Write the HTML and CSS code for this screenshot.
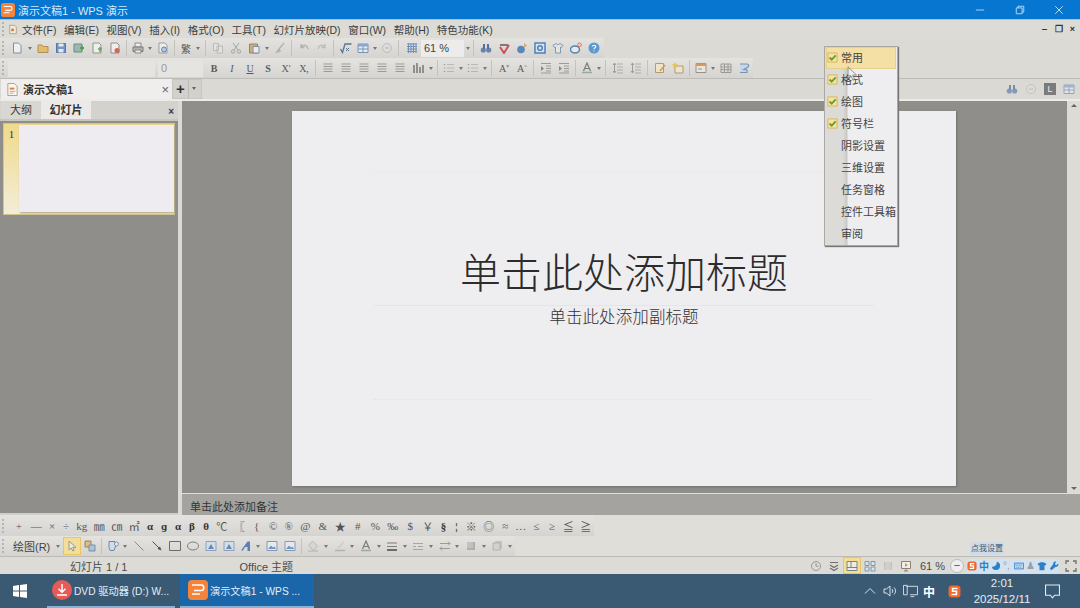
FILE: index.html
```html
<!DOCTYPE html>
<html lang="zh-CN">
<head>
<meta charset="utf-8">
<title>演示文稿1 - WPS 演示</title>
<link rel="stylesheet" href="styles.css">
</head>
<body>
<svg class="sprite" width="0" height="0">
  <symbol id="doc" viewBox="0 0 12 12"><path d="M2.500 1h5l2.500 2.500V11h-7.500z" fill="#f4f4f2" stroke="#6d7f96"/></symbol>
  <symbol id="open" viewBox="0 0 12 12"><path d="M1 3h4l1 1.500h5V10.500H1z" fill="#e6b755" stroke="#a9803a"/></symbol>
  <symbol id="save" viewBox="0 0 12 12"><path d="M1.500 1.500h9v9h-9z" fill="#5d86c4" stroke="#3a5c96"/><path d="M3.500 1.500h5v3h-5zM3.500 7h5v3.500h-5z" fill="#e8edf3"/></symbol>
  <symbol id="saveas" viewBox="0 0 12 12"><path d="M1 2h8v8H1z" fill="#8fb0a8" stroke="#4f7c70"/><path d="M7 6h4M9 4v4" stroke="#2f9a3c" stroke-width="2"/></symbol>
  <symbol id="pdf" viewBox="0 0 12 12"><path d="M2 1h6l2 2v8H2z" fill="#f2f2ef" stroke="#7d8a7a"/><path d="M7 7h4M9 5v5" stroke="#4a9a55" stroke-width="1.500"/></symbol>
  <symbol id="pdfr" viewBox="0 0 12 12"><path d="M2 1h6l2 2v8H2z" fill="#f2f2ef" stroke="#8a7a7a"/><circle cx="8" cy="8.500" r="2.500" fill="#cf4d42"/></symbol>
  <symbol id="print" viewBox="0 0 12 12"><path d="M3 1h6v4H3z" fill="#f0f0ee" stroke="#7b7b7b"/><path d="M1 5h10v4.500H1z" fill="#a8a8a6" stroke="#666"/><path d="M3 8h6v3H3z" fill="#eee" stroke="#777"/></symbol>
  <symbol id="preview" viewBox="0 0 12 12"><path d="M2 1h6l2 2v8H2z" fill="#f0f0ee" stroke="#8593a3"/><circle cx="7" cy="7.500" r="2.500" fill="#a9c8e6" stroke="#4f7397"/></symbol>
  <symbol id="copy" viewBox="0 0 12 12"><path d="M1.500 1.500h5v7h-5zM5 4h5.500v7H5z" fill="#e5e5e2" stroke="#b2b2ae"/></symbol>
  <symbol id="cut" viewBox="0 0 12 12"><path d="M3 1l5 7M9 1L4 8" stroke="#999" fill="none"/><circle cx="3" cy="9.500" r="1.700" fill="none" stroke="#999"/><circle cx="9" cy="9.500" r="1.700" fill="none" stroke="#999"/></symbol>
  <symbol id="paste" viewBox="0 0 12 12"><path d="M1.500 2h8v9h-8z" fill="#c7a768" stroke="#8a7140"/><path d="M5 4.500h6V11H5z" fill="#edf0f4" stroke="#6b7f96"/></symbol>
  <symbol id="brush" viewBox="0 0 12 12"><path d="M10 1L5 7M5 7l-2 3 3-1z" stroke="#aaa" stroke-width="1.500" fill="none"/></symbol>
  <symbol id="undo" viewBox="0 0 12 12"><path d="M3 5c3-3 6-2 7 2M3 2v3.500h3.500" stroke="#a7a7a3" stroke-width="1.300" fill="none"/></symbol>
  <symbol id="redo" viewBox="0 0 12 12"><path d="M9 5C6 2 3 3 2 7M9 2v3.500H5.500" stroke="#b6b6b2" stroke-width="1.300" fill="none"/></symbol>
  <symbol id="sqrt" viewBox="0 0 12 12"><path d="M0.500 7l2 3.500L5 2h6.500" stroke="#3f5f85" stroke-width="1.300" fill="none"/><path d="M6 9l3-3M9 9L6 6" stroke="#3f5f85"/></symbol>
  <symbol id="table" viewBox="0 0 12 12"><path d="M1 2h10v8.500H1z" fill="#e7eef7" stroke="#6484ad"/><path d="M1 2h10v2.500H1z" fill="#7a9bc9"/><path d="M1 7h10M6 4.500v6" stroke="#6484ad"/></symbol>
  <symbol id="clip" viewBox="0 0 12 12"><circle cx="6" cy="6" r="4.500" fill="#ddd" stroke="#b5b5b0"/><path d="M4 6h4" stroke="#aaa"/></symbol>
  <symbol id="grid" viewBox="0 0 12 12"><path d="M1 2h10M1 4.500h10M1 7h10M1 9.500h10M2.500 1v10M5 1v10M7.500 1v10M10 1v10" stroke="#5f7fb2"/></symbol>
  <symbol id="find" viewBox="0 0 12 12"><circle cx="3.300" cy="8" r="2.600" fill="#4a73a8"/><circle cx="8.700" cy="8" r="2.600" fill="#4a73a8"/><path d="M3 2h2v5H3zM7 2h2v5H7z" fill="#38598a"/></symbol>
  <symbol id="spell" viewBox="0 0 12 12"><path d="M2 5l4 6 5-8" stroke="#c8323c" stroke-width="2" fill="none"/><path d="M2 3h8" stroke="#7a5a66" stroke-width="2"/></symbol>
  <symbol id="share" viewBox="0 0 12 12"><circle cx="5" cy="7.500" r="3.800" fill="#3e74b6"/><path d="M8 1l3 2.500-3 2.500z" fill="#e09a46"/></symbol>
  <symbol id="dbox" viewBox="0 0 12 12"><path d="M1 1h10v10H1z" fill="#d7e3f2" stroke="#2f6fb3" stroke-width="1.500"/><circle cx="6" cy="6" r="2.300" fill="none" stroke="#2f6fb3" stroke-width="1.500"/></symbol>
  <symbol id="shirt" viewBox="0 0 12 12"><path d="M4 1.500L1 3.500l1.500 2 1-.5V11h5V5l1 .5 1.500-2-3-2-2 1.500z" fill="#e7e7e4" stroke="#6f8aa8"/></symbol>
  <symbol id="weibo" viewBox="0 0 12 12"><ellipse cx="5" cy="7.500" rx="4.500" ry="3.500" fill="#e8edf3" stroke="#3c6fa8" stroke-width="1.500"/><circle cx="9.500" cy="2.800" r="1.800" fill="none" stroke="#d05a4b"/></symbol>
  <symbol id="help" viewBox="0 0 12 12"><circle cx="6" cy="6" r="5.500" fill="#3d8bd4"/><path d="M4.300 4.500C4.500 2.800 7.800 2.800 7.800 4.600 7.800 5.800 6 5.800 6 7.300" stroke="#fff" stroke-width="1.200" fill="none"/><path d="M5.400 8.400h1.200v1.200H5.400z" fill="#fff"/></symbol>
  <symbol id="align" viewBox="0 0 12 12"><path d="M1.500 2h9M1.500 4.500h9M1.500 7h9M1.500 9.500h9" stroke="#8b8b88" stroke-width="1.200"/></symbol>
  <symbol id="chart" viewBox="0 0 12 12"><path d="M2 11V3M5 11V1M8 11V5M11 11V3" stroke="#66635e" stroke-width="1.500"/></symbol>
  <symbol id="list" viewBox="0 0 12 12"><path d="M4 2.500h7M4 6h7M4 9.500h7" stroke="#b0b0ac"/><path d="M1.500 2v1M1.500 5.500v1M1.500 9v1" stroke="#8e8e8b" stroke-width="1.500"/></symbol>
  <symbol id="indent" viewBox="0 0 12 12"><path d="M1 1.500h10M6 4h5M6 6.500h5M6 9h5M1 11h10" stroke="#8d8d8a"/><path d="M1 4l3 2.500L1 9z" fill="#777"/></symbol>
  <symbol id="fcolor" viewBox="0 0 12 12"><path d="M2.500 9L6 1l3.500 8M4 6.500h4" stroke="#666" stroke-width="1.200" fill="none"/><path d="M1 10.500h10" stroke="#8aa08f" stroke-width="1.500"/></symbol>
  <symbol id="spacing" viewBox="0 0 12 12"><path d="M5 2h6M5 5h6M5 8h6M5 11h6" stroke="#a3a3a0"/><path d="M2.500 1v10M1 3l1.500-2L4 3M1 9l1.500 2L4 9" stroke="#8f8f8c" fill="none"/></symbol>
  <symbol id="note" viewBox="0 0 12 12"><path d="M1.500 1.500h8v9h-8z" fill="#efe8cc" stroke="#a88f53"/><path d="M11 3L6 9" stroke="#d68a33" stroke-width="1.500"/></symbol>
  <symbol id="star" viewBox="0 0 12 12"><path d="M3 4h8v7H3z" fill="#eee8cf" stroke="#a88f53"/><path d="M3 0l1 2 2 .500-1.500 1.500.3 2L3 5 1.200 6l.3-2L0 2.500 2 2z" fill="#ecbb37"/></symbol>
  <symbol id="layout" viewBox="0 0 12 12"><path d="M1 1.500h10v9H1z" fill="#ece9e0" stroke="#8a8378"/><path d="M1 1.500h10v2.500H1z" fill="#d28b46"/><path d="M3 7h4" stroke="#8a8378"/></symbol>
  <symbol id="tbl2" viewBox="0 0 12 12"><path d="M1 2h10v8.500H1z" fill="#dedcd7" stroke="#8a8a87"/><path d="M1 5h10M1 7.700h10M4.500 2v8.500M8 2v8.500" stroke="#8a8a87"/></symbol>
  <symbol id="cycle" viewBox="0 0 12 12"><path d="M2 2h7c2 0 2 2 1 3L6 7.500c2 0 4 0 3 3H2" fill="#c6d4e6" stroke="#5f84b6" stroke-width="1.200"/></symbol>
  <symbol id="pointer" viewBox="0 0 12 12"><path d="M3 1v9l2.300-2 1.500 3 1.400-.7-1.500-3H10z" fill="#eeeee8" stroke="#7d8ba0"/></symbol>
  <symbol id="wrap" viewBox="0 0 12 12"><path d="M1 1h6v6H1z" fill="#d8b871" stroke="#8a7140"/><path d="M5 5h6v6H5z" fill="#a8bed8" stroke="#5f7fa5"/></symbol>
  <symbol id="shapes" viewBox="0 0 12 12"><path d="M2 1.500h6v3l1 1-2 5H3l-1-3z" fill="#cfdcec" stroke="#55769e"/><circle cx="9.500" cy="4" r="2" fill="#eee" stroke="#6d85a5"/></symbol>
  <symbol id="line" viewBox="0 0 12 12"><path d="M1.500 1.500l9 9" stroke="#777"/></symbol>
  <symbol id="arrow" viewBox="0 0 12 12"><path d="M1.500 1.500l7 7" stroke="#333"/><path d="M10.500 10.500l-4-1.500 2.500-2.500z" fill="#333"/></symbol>
  <symbol id="rect" viewBox="0 0 12 12"><path d="M.5 1.500h11v9H.5z" fill="none" stroke="#555"/></symbol>
  <symbol id="oval" viewBox="0 0 12 12"><ellipse cx="6" cy="6" rx="5.500" ry="4" fill="none" stroke="#6a6a6a"/></symbol>
  <symbol id="tbox" viewBox="0 0 12 12"><path d="M1 1.500h10v9H1z" fill="#d2dff0" stroke="#7b95b8"/><path d="M6 4L3 9h6z" fill="#5078aa"/></symbol>
  <symbol id="wordart" viewBox="0 0 12 12"><path d="M1 10.500L7.500 1.500H10v9.500H7.500V7H5L3 10.500z" fill="#3b6fb3"/></symbol>
  <symbol id="pic" viewBox="0 0 12 12"><path d="M1 1.500h10v9H1z" fill="#e8edf4" stroke="#6e8bb1"/><path d="M2 9l3-3.500 2 2 1.500-1L10 9z" fill="#5c86b8"/></symbol>
  <symbol id="fill" viewBox="0 0 12 12"><path d="M5.500 1l5 5-4 4.500-5-5z" fill="#d5d5d2" stroke="#b0b0ac"/><path d="M1 11h10" stroke="#b8b8b4" stroke-width="1.500"/></symbol>
  <symbol id="lcolor" viewBox="0 0 12 12"><path d="M9.500 1L4 7 3 9l2-1 5.500-6z" fill="#c8c8c5"/><path d="M1 10.500h10" stroke="#aaa" stroke-width="1.500"/></symbol>
  <symbol id="thick" viewBox="0 0 12 12"><path d="M1 3h10M1 6.500h10" stroke="#666" stroke-width="1.200"/><path d="M1 10h10" stroke="#555" stroke-width="2"/></symbol>
  <symbol id="dash" viewBox="0 0 12 12"><path d="M1 3.500h10M1 6.500h3M6 6.500h5M1 9.500h10" stroke="#9a9a97"/></symbol>
  <symbol id="arrows" viewBox="0 0 12 12"><path d="M1 3.500h10M1 8.500h10" stroke="#8c8c89"/><path d="M9 1.500l2 2-2 2M3 6.500l-2 2 2 2" stroke="#8c8c89" fill="none"/></symbol>
  <symbol id="shadow" viewBox="0 0 12 12"><path d="M2 2h8v8H2z" fill="#a5a5a2"/><path d="M2 2h6v6H2z" fill="#bcbcb9"/></symbol>
  <symbol id="cube" viewBox="0 0 12 12"><path d="M3 3l2-2h6v7l-2 2H2z" fill="#bbb"/><path d="M2 3h7v7H2z" fill="#d0d0cd" stroke="#aaa"/></symbol>
  <symbol id="clock" viewBox="0 0 12 12"><circle cx="6" cy="6" r="4.500" fill="none" stroke="#888"/><path d="M6 3v3.200h2.500" stroke="#888" fill="none"/></symbol>
  <symbol id="chev" viewBox="0 0 12 12"><path d="M2 2.500h8M2 5l4 2.500L10 5M2 8l4 2.500L10 8" stroke="#555" fill="none" stroke-width="1.200"/></symbol>
  <symbol id="view1" viewBox="0 0 12 12"><path d="M1 1.500h10v9H1z" fill="#eef1f5" stroke="#5c7088"/><path d="M1 7.500h10M5 1.500v6" stroke="#5c7088"/></symbol>
  <symbol id="view2" viewBox="0 0 12 12"><path d="M1 1.500h4v4H1zM7 1.500h4v4H7zM1 7h4v4H1zM7 7h4v4H7z" fill="#dbe5ef" stroke="#7288a2"/></symbol>
  <symbol id="view3" viewBox="0 0 12 12"><path d="M2 2h8v8H2z" fill="#b9b9b6"/><path d="M4 2v8M6 2v8M8 2v8" stroke="#e1e0dc"/></symbol>
  <symbol id="view4" viewBox="0 0 12 12"><path d="M1.500 1.500h9v7h-9z" fill="#f2f1ea" stroke="#77705f"/><path d="M5 3l3 2-3 2z" fill="#dd8a2a"/><path d="M6 8.500V11M4 11h4" stroke="#77705f"/></symbol>
  <symbol id="full" viewBox="0 0 12 12"><path d="M1 4V1h3M8 1h3v3M11 8v3H8M4 11H1V8" stroke="#555" stroke-width="1.300" fill="none"/></symbol>
  <symbol id="check" viewBox="0 0 12 12"><path d="M1 1h10v10H1z" fill="#f6e3a0" stroke="#d8b45c"/><path d="M2.800 6l2.300 2.300L9.500 3.700" stroke="#5fa32e" stroke-width="2" fill="none"/></symbol>
  <symbol id="sogou" viewBox="0 0 12 12"><rect x="0.500" y="0.500" width="11" height="11" rx="3" fill="#ee6a2c"/><path d="M8.800 3.200H4.200v2.600h3.600v3H3.200" stroke="#fff" stroke-width="1.500" fill="none"/></symbol>
  <symbol id="moon" viewBox="0 0 12 12"><path d="M7 1a5 5 0 1 1-6 6 5.500 5.500 0 0 0 6-6z" fill="#2f7fc5"/></symbol>
  <symbol id="kbd" viewBox="0 0 12 12"><path d="M.5 2.500h11v7H.5z" fill="#bcd6ef" stroke="#2f7fc5"/><path d="M2 5h8M3 7.500h6" stroke="#2f7fc5" stroke-dasharray="1 1"/></symbol>
  <symbol id="tshirt" viewBox="0 0 12 12"><path d="M4 1.500L.5 3.500l1.500 2 1-.5V11h6V5l1 .5 1.500-2L8 1.500z" fill="#2f7fc5"/></symbol>
  <symbol id="wrench" viewBox="0 0 12 12"><path d="M11 3L8.500 5 7 3.500 9 1C7 0 4.500 1.500 5 4L1 9l2 2 5-4c2.500.5 4-2 3-4z" fill="#2f7fc5"/></symbol>
  <symbol id="win" viewBox="0 0 14 14"><path d="M0 2l6-.9v5.400H0zM7 1l7-1v6.500H7zM0 7.500h6v5.400L0 12zM7 7.500h7V14l-7-1z" fill="#fff"/></symbol>
  <symbol id="dl" viewBox="0 0 20 20"><circle cx="10" cy="10" r="10" fill="#e85a55"/><path d="M10 4v8M6.500 8.800L10 12.300l3.500-3.500M5 15h10" stroke="#fff" stroke-width="1.500" fill="none"/></symbol>
  <symbol id="wps" viewBox="0 0 20 20"><rect width="20" height="20" rx="4" fill="#f5843a"/><path d="M4 5h9.500c3 0 3 5.500 0 5.500H6M4 14h8" stroke="#fff" stroke-width="1.500" fill="none"/></symbol>
  <symbol id="spk" viewBox="0 0 14 14"><path d="M1 5h2.500L7 2v10L3.500 9H1z" fill="none" stroke="#d7dfe6"/><path d="M9 5c1 1 1 3 0 4M11 3.500c2 2 2 5 0 7" stroke="#d7dfe6" fill="none"/></symbol>
  <symbol id="net" viewBox="0 0 16 14"><path d="M3.500 2h12v9h-8" fill="none" stroke="#d7dfe6"/><path d="M.5 1h4v10h-4zM8 13h4" fill="none" stroke="#d7dfe6"/></symbol>
  <symbol id="bubble" viewBox="0 0 14 14"><path d="M.5 1h13v9.500H9L7 13l-2-2.500H.5z" fill="none" stroke="#e6ecf1"/></symbol>
  <symbol id="up" viewBox="0 0 12 12"><path d="M1 8.500L6 3.500l5 5" stroke="#d7dfe6" fill="none"/></symbol>
  <symbol id="file" viewBox="0 0 14 14"><path d="M2 .5h7L12 3.500V13.500H2z" fill="#faf7f0" stroke="#aa9a88"/><path d="M4 5h5v2H4z" fill="#e07c39"/><path d="M4 9h6M4 11h4" stroke="#b9a58f"/></symbol>
  <symbol id="menuico" viewBox="0 0 12 14"><path d="M2 2h6l2 2v8H2z" fill="#efe9dc" stroke="#b19a80"/><path d="M4 6h3v3H4z" fill="#d9752f"/></symbol>
</svg>

<div class="app">
  <header class="titlebar">
    <svg class="tb-logo"><use href="#wps"/></svg>
    <span class="tb-title">演示文稿1 - WPS 演示</span>
    <div class="wincontrols">
      <svg class="wc" viewBox="0 0 12 12"><path d="M1 6h10" stroke="#cfe4f6"/></svg>
      <svg class="wc" viewBox="0 0 12 12"><path d="M1.500 3.500h7v7h-7zM3.500 3.500v-2h7v7h-2" stroke="#cfe4f6" fill="none"/></svg>
      <svg class="wc" viewBox="0 0 12 12"><path d="M1.500 1.500l9 9M10.500 1.500l-9 9" stroke="#e2f0fb"/></svg>
    </div>
  </header>

  <nav class="menubar">
    <i class="grip"></i>
    <svg class="menu-ico"><use href="#menuico"/></svg>
    <span>文件(F)</span><span>编辑(E)</span><span>视图(V)</span><span>插入(I)</span><span>格式(O)</span><span>工具(T)</span><span>幻灯片放映(D)</span><span>窗口(W)</span><span>帮助(H)</span><span>特色功能(K)</span>
    <div class="doc-controls">
      <b class="dc">‒</b><b class="dc">❐</b><b class="dc">×</b>
    </div>
  </nav>

  <div class="toolrow">
    <div class="bar bar-std">
      <i class="grip"></i>
      <b class="t"><svg><use href="#doc"/></svg></b><b class="d"></b>
      <b class="t"><svg><use href="#open"/></svg></b>
      <b class="t"><svg><use href="#save"/></svg></b>
      <b class="t"><svg><use href="#saveas"/></svg></b>
      <b class="t"><svg><use href="#pdf"/></svg></b>
      <b class="t"><svg><use href="#pdfr"/></svg></b>
      <i class="s"></i>
      <b class="t n"><svg><use href="#print"/></svg></b><b class="d"></b>
      <b class="t"><svg><use href="#preview"/></svg></b>
      <i class="s"></i>
      <b class="t n g">繁</b><b class="d w"></b>
      <i class="s s2"></i>
      <b class="t"><svg><use href="#copy"/></svg></b>
      <b class="t"><svg><use href="#cut"/></svg></b>
      <b class="t"><svg><use href="#paste"/></svg></b><b class="d"></b>
      <b class="t"><svg><use href="#brush"/></svg></b>
      <i class="s"></i>
      <b class="t"><svg><use href="#undo"/></svg></b>
      <b class="t"><svg><use href="#redo"/></svg></b>
      <i class="s"></i>
      <b class="t"><svg><use href="#sqrt"/></svg></b>
      <b class="t n"><svg><use href="#table"/></svg></b><b class="d"></b>
      <b class="t n"><svg><use href="#clip"/></svg></b>
      <i class="s s3"></i>
      <b class="t"><svg><use href="#grid"/></svg></b>
      <span class="combo zoom">61 %</span><b class="d"></b>
      <i class="s s2"></i>
      <b class="t"><svg><use href="#find"/></svg></b>
      <b class="t"><svg><use href="#spell"/></svg></b>
      <b class="t"><svg><use href="#share"/></svg></b>
      <b class="t"><svg><use href="#dbox"/></svg></b>
      <b class="t"><svg><use href="#shirt"/></svg></b>
      <b class="t"><svg><use href="#weibo"/></svg></b>
      <b class="t"><svg><use href="#help"/></svg></b>
    </div>
  </div>

  <div class="toolrow">
    <div class="bar bar-fmt">
      <i class="grip"></i>
      <span class="combo font"></span>
      <span class="combo size">0</span>
      <b class="t f fb">B</b><b class="t f fi">I</b><b class="t f fu">U</b><b class="t f fb">S</b><b class="t f">X'</b><b class="t f">X,</b>
      <i class="s"></i>
      <b class="t"><svg><use href="#align"/></svg></b><b class="t"><svg><use href="#align"/></svg></b><b class="t"><svg><use href="#align"/></svg></b><b class="t"><svg><use href="#align"/></svg></b><b class="t"><svg><use href="#align"/></svg></b>
      <b class="t"><svg><use href="#chart"/></svg></b><b class="d"></b>
      <i class="s"></i>
      <b class="t n"><svg><use href="#list"/></svg></b><b class="d"></b>
      <b class="t n"><svg><use href="#list"/></svg></b><b class="d"></b>
      <i class="s"></i>
      <b class="t f">A⁺</b><b class="t f">A⁻</b>
      <i class="s"></i>
      <b class="t"><svg><use href="#indent"/></svg></b><b class="t"><svg><use href="#indent"/></svg></b>
      <i class="s"></i>
      <b class="t n"><svg><use href="#fcolor"/></svg></b><b class="d"></b>
      <i class="s"></i>
      <b class="t"><svg><use href="#spacing"/></svg></b><b class="t"><svg><use href="#spacing"/></svg></b>
      <i class="s"></i>
      <b class="t"><svg><use href="#note"/></svg></b><b class="t"><svg><use href="#star"/></svg></b>
      <i class="s"></i>
      <b class="t n"><svg><use href="#layout"/></svg></b><b class="d"></b>
      <b class="t"><svg><use href="#tbl2"/></svg></b><b class="t"><svg><use href="#cycle"/></svg></b>
    </div>
  </div>

  <div class="tabrow">
    <div class="doctab">
      <svg class="doctab-ico"><use href="#file"/></svg>
      <span class="doctab-name">演示文稿1</span>
      <span class="doctab-x">×</span>
    </div>
    <div class="newtab"><span class="plus">+</span><span class="plus-d"></span></div>
    <div class="tab-tools">
      <svg><use href="#find"/></svg>
      <svg><use href="#clip"/></svg>
      <span class="tt-l">L</span>
      <svg><use href="#table"/></svg>
    </div>
  </div>

  <main class="workspace">
    <aside class="panel">
      <div class="panel-tabs">
        <span class="ptab">大纲</span>
        <span class="ptab on">幻灯片</span>
        <span class="ptab-x">×</span>
      </div>
      <div class="thumbs">
        <div class="thumb-row">
          <span class="thumb-n">1</span>
          <div class="thumb"></div>
        </div>
      </div>
    </aside>
    <section class="editor">
      <div class="stage">
        <div class="canvas">
          <div class="slide">
            <div class="ph ph-title">单击此处添加标题</div>
            <div class="ph ph-sub">单击此处添加副标题</div>
          </div>
        </div>
        <div class="vscroll"><span class="vs-up"></span><span class="vs-down"></span></div>
      </div>
      <div class="notes">单击此处添加备注</div>
    </section>
  </main>

  <div class="toolrow low sym">
    <div class="bar bar-sym">
      <i class="grip"></i>
      <b class="c">+</b><b class="c">—</b><b class="c n">×</b><b class="c n">÷</b><b class="c">kg</b><b class="c">㎜</b><b class="c">㎝</b><b class="c">㎡</b><b class="c n k">α</b><b class="c n k">ɡ</b><b class="c n k">α</b><b class="c n k">β</b><b class="c n k">θ</b><b class="c">℃</b><b class="c">〖</b><b class="c">{</b><b class="c m">©</b><b class="c m">®</b><b class="c">@</b><b class="c">&amp;</b><b class="c">★</b><b class="c">#</b><b class="c">%</b><b class="c">‰</b><b class="c">$</b><b class="c">￥</b><b class="c n k">§</b><b class="c x k">¦</b><b class="c">※</b><b class="c">◎</b><b class="c m">≈</b><b class="c m">…</b><b class="c m">≤</b><b class="c m">≥</b><b class="c">≦</b><b class="c">≧</b>
    </div>
  </div>

  <div class="toolrow low">
    <div class="bar bar-draw">
      <i class="grip"></i>
      <span class="draw-label">绘图(R)</span><b class="d"></b>
      <b class="t on"><svg><use href="#pointer"/></svg></b>
      <b class="t"><svg><use href="#wrap"/></svg></b>
      <i class="s"></i>
      <b class="t n"><svg><use href="#shapes"/></svg></b><b class="d"></b>
      <b class="t"><svg><use href="#line"/></svg></b>
      <b class="t"><svg><use href="#arrow"/></svg></b>
      <b class="t"><svg><use href="#rect"/></svg></b>
      <b class="t"><svg><use href="#oval"/></svg></b>
      <b class="t"><svg><use href="#tbox"/></svg></b>
      <b class="t"><svg><use href="#tbox"/></svg></b>
      <b class="t n"><svg><use href="#wordart"/></svg></b><b class="d"></b>
      <b class="t"><svg><use href="#pic"/></svg></b>
      <b class="t"><svg><use href="#pic"/></svg></b>
      <i class="s"></i>
      <b class="t n2"><svg><use href="#fill"/></svg></b><b class="d"></b>
      <b class="t n2"><svg><use href="#lcolor"/></svg></b><b class="d"></b>
      <b class="t n2"><svg><use href="#fcolor"/></svg></b><b class="d"></b>
      <b class="t n2"><svg><use href="#thick"/></svg></b><b class="d"></b>
      <b class="t n2"><svg><use href="#dash"/></svg></b><b class="d"></b>
      <b class="t n2"><svg><use href="#arrows"/></svg></b><b class="d"></b>
      <b class="t n2"><svg><use href="#shadow"/></svg></b><b class="d"></b>
      <b class="t n2"><svg><use href="#cube"/></svg></b><b class="d"></b>
    </div>
  </div>

  <footer class="status">
    <span class="st-slide">幻灯片 1 / 1</span>
    <span class="st-theme">Office 主题</span>
    <div class="st-right">
      <b class="t"><svg><use href="#clock"/></svg></b>
      <b class="t"><svg><use href="#chev"/></svg></b>
      <b class="t on"><svg><use href="#view1"/></svg></b>
      <b class="t"><svg><use href="#view2"/></svg></b>
      <b class="t"><svg><use href="#view3"/></svg></b>
      <b class="t"><svg><use href="#view4"/></svg></b>
      <span class="st-zoom">61 %</span>
      <span class="st-minus">−</span>
      <div class="sogou">
        <svg><use href="#sogou"/></svg>
        <span class="sg-cn">中</span>
        <svg><use href="#moon"/></svg>
        <span class="sg-dot">°,</span>
        <svg><use href="#kbd"/></svg>
        <span class="sg-dot">♟</span>
        <svg><use href="#tshirt"/></svg>
        <svg><use href="#wrench"/></svg>
      </div>
      <b class="t"><svg><use href="#full"/></svg></b>
    </div>
    <span class="tip">点我设置</span>
  </footer>

  <div class="taskbar">
    <div class="start"><svg><use href="#win"/></svg></div>
    <div class="task"><svg><use href="#dl"/></svg><span>DVD 驱动器 (D:) W...</span></div>
    <div class="task active"><svg><use href="#wps"/></svg><span>演示文稿1 - WPS ...</span></div>
    <div class="tray">
      <svg class="tr-up"><use href="#up"/></svg>
      <svg class="tr-i"><use href="#spk"/></svg>
      <svg class="tr-n"><use href="#net"/></svg>
      <span class="tr-cn">中</span>
      <svg class="tr-s"><use href="#sogou"/></svg>
      <div class="clock"><span>2:01</span><span>2025/12/11</span></div>
      <svg class="tr-b"><use href="#bubble"/></svg>
    </div>
  </div>

  <div class="popup">
    <div class="pi hot"><svg><use href="#check"/></svg><span>常用</span></div>
    <div class="pi"><svg><use href="#check"/></svg><span>格式</span></div>
    <div class="pi"><svg><use href="#check"/></svg><span>绘图</span></div>
    <div class="pi"><svg><use href="#check"/></svg><span>符号栏</span></div>
    <div class="pi plain"><span>阴影设置</span></div>
    <div class="pi plain"><span>三维设置</span></div>
    <div class="pi plain"><span>任务窗格</span></div>
    <div class="pi plain"><span>控件工具箱</span></div>
    <div class="pi plain"><span>审阅</span></div>
  </div>
  <svg class="cursor" viewBox="0 0 12 18"><path d="M1 1v13l3.200-3 2.300 5 2-1-2.300-4.800H10.500z" fill="#eeeeee" fill-opacity=".6" stroke="#6f6f6f" stroke-width=".8"/></svg>
</div>
</body>
</html>
```
FILE: styles.css
```css
* { box-sizing: border-box; }
html, body { margin: 0; padding: 0; }
body {
  width: 1080px; height: 608px; overflow: hidden;
  font-family: "Liberation Sans", "Noto Sans CJK SC", sans-serif;
  font-size: 11px; color: #3a3a38; background: #dcdbd6;
}
.sprite { position: absolute; }
b, i { font-weight: normal; font-style: normal; }
.app { position: relative; width: 1080px; height: 608px; display: flex; flex-direction: column; }

.titlebar { height: 19px; flex: none; display: flex; align-items: center; background: #0676d0; color: #d6e9f8; font-size: 11px; }
.tb-logo { width: 14px; height: 14px; margin-left: 1px; }
.tb-title { margin-left: 3px; }
.wincontrols { margin-left: auto; display: flex; gap: 29.500px; margin-right: 16px; }
.wc { width: 10px; height: 10px; }

.menubar { height: 19px; flex: none; display: flex; align-items: center; background: #dcdbd6; border-top: 1px solid #aebfcd; padding-left: 2px; color: #3c3c3a; font-size: 10.500px; }
.menubar > span { margin-right: 7.600px; white-space: nowrap; }
.menu-ico { width: 10px; height: 13px; margin: 0 4px 0 4px; }
.grip { width: 2px; height: 14px; flex: none; border-left: 2px dotted #b5b4af; }
.doc-controls { margin-left: auto; display: flex; gap: 5px; margin-right: 3px; }
.dc { width: 9px; text-align: center; font-size: 9px; font-weight: bold; color: #333; }

.toolrow { height: 20px; flex: none; display: flex; background: #dbdad5; }
.bar { height: 20px; display: flex; align-items: center; padding-left: 2px; background: linear-gradient(#e4e3e0, #d5d4d0); }
.bar-std { width: 604px; }
.bar-std .grip { margin-right: 4px; }
.bar-fmt { width: 753px; }
.bar-fmt .grip { margin-right: 4px; }
.bar-sym { width: 594px; height: 21px; padding-left: 2px; }
.bar-sym .grip { margin-right: 6px; }
.bar-draw { width: 515px; }
.low { background: #dfded9; }
.toolrow.sym { height: 21px; }

.t { width: 18px; height: 18px; flex: none; display: flex; align-items: center; justify-content: center; font-size: 10px; color: #666; }
.t svg { width: 12px; height: 12px; opacity: .82; filter: blur(.3px); }
.t.n { width: 16px; }
.t.n2 { width: 17.300px; }
.t.g { font-size: 10px; color: #555; }
.t.f { font-family: "Liberation Serif", serif; font-size: 10px; color: #5a5a58; }
.fb { font-weight: bold; }
.fi { font-style: italic; }
.fu { text-decoration: underline; }
.t.on { background: #f4de93; box-shadow: inset 0 0 0 1px #e8c566; }
.d { width: 8px; height: 18px; flex: none; position: relative; }
.d::after { content: ""; position: absolute; left: 2px; top: 8px; border: 2px solid transparent; border-top: 3px solid #777; border-bottom: 0; }
.d.w { width: 10px; }
.s { width: 6px; height: 16px; flex: none; position: relative; }
.s::after { content: ""; position: absolute; left: 2px; top: 0; width: 1px; height: 16px; background: #c3c2bd; }
.s.s2 { width: 5px; }
.s.s2::after { left: 1px; }
.s.s3 { width: 8px; }
.s.s3::after { left: 3px; }

.combo { height: 17px; display: block; flex: none; background: #e5e4e1; font-size: 10px; padding: 2px 0 0 3px; }
.combo.zoom { width: 43px; background: #edecea; font-size: 11px; color: #444; }
.combo.font { width: 147px; margin-right: 3px; }
.combo.size { width: 45px; margin-right: 2px; color: #999; font-size: 11px; }

.tabrow { height: 23px; flex: none; display: flex; align-items: center; background: #dad9d4; border-top: 1px solid #bdbcb8; border-bottom: 2px solid #ecebe8; }
.doctab { width: 171px; height: 20px; display: flex; align-items: center; background: #efeeec; padding-left: 5px; margin-left: 1px; }
.doctab-ico { width: 13px; height: 13px; }
.doctab-name { margin-left: 4px; font-weight: bold; color: #333; font-size: 11px; }
.doctab-x { margin-left: auto; margin-right: 3px; color: #666; font-size: 13px; }
.newtab { width: 30px; height: 20px; display: flex; align-items: center; background: #d2d1cc; border: 1px solid #c6c5c0; }
.plus { width: 16px; text-align: center; font-size: 15px; font-weight: bold; color: #333; border-right: 1px solid #bbb; line-height: 18px; }
.plus-d { width: 0; height: 0; margin-left: 3px; border: 2px solid transparent; border-top: 3px solid #666; }
.tab-tools { margin-left: auto; display: flex; align-items: center; gap: 7px; margin-right: 5px; }
.tab-tools svg { width: 12px; height: 12px; opacity: .6; }
.tt-l { width: 12px; height: 12px; background: #7c7b7b; color: #eee; font-size: 9px; text-align: center; line-height: 12px; }

.workspace { flex: 1; min-height: 0; display: flex; background: #dbdad5; }
.panel { width: 178px; flex: none; display: flex; flex-direction: column; background: #8f8e8a; border-bottom: 2px solid #cfcec9; }
.panel-tabs { height: 20px; flex: none; display: flex; background: #d3d2cd; position: relative; padding-left: 1px; border-bottom: 2px solid #c8c7bf; }
.ptab { width: 40px; text-align: center; line-height: 19px; background: #d8d7d2; font-size: 11px; }
.ptab.on { width: 50px; background: #ebeae8; font-weight: bold; color: #333; }
.ptab-x { position: absolute; right: 4px; top: 5px; font-size: 10px; font-weight: bold; }
.thumbs { flex: 1; padding: 2px 3px 0 3px; }
.thumb-row { height: 92px; display: flex; background: linear-gradient(#f0da8a, #f3edd8); border: 1px solid #d3c48e; }
.thumb-n { width: 15px; text-align: center; font-family: "Liberation Serif", serif; font-size: 11px; padding-top: 4px; color: #333; }
.thumb { width: 155px; height: 87px; margin-top: 1px; background: #eeecf0; box-shadow: 1px 1px 2px #a69f85; }
.editor { flex: 1; min-width: 0; display: flex; flex-direction: column; margin-left: 4px; }
.stage { flex: 1; min-height: 0; display: flex; background: #8f8e8a; }
.canvas { flex: 1; padding: 10px 0 0 110px; }
.slide { width: 664px; height: 375px; background: #eeedf0; box-shadow: 1px 1px 2px #6f6e6b; display: flex; flex-direction: column; align-items: center; padding-top: 60px; }
.ph { width: 500px; text-align: center; font-family: "Noto Sans CJK SC", sans-serif; font-weight: 300; color: #333; }
.ph-title { height: 135px; padding-top: 70px; font-size: 41px; line-height: 56px; color: #2c2c2c; border-bottom: 1px solid #e5e4e7; border-top: 1px dotted #e8e7ea; }
.ph-sub { height: 94px; font-size: 16.500px; line-height: 20px; letter-spacing: .1px; color: #333; border-bottom: 1px dotted #e4e3e6; }
.vscroll { width: 13px; flex: none; background: #dcdbd6; display: flex; flex-direction: column; justify-content: space-between; align-items: center; padding: 3px 0; }
.vs-up, .vs-down { width: 0; height: 0; border: 3px solid transparent; }
.vs-up { border-bottom: 3px solid #666; border-top: 0; }
.vs-down { border-top: 3px solid #666; border-bottom: 0; }
.notes { height: 22px; flex: none; background: #a5a39f; border-top: 1px solid #dededa; padding: 4px 0 0 8px; color: #333; font-size: 11px; }

.c { width: 17.500px; flex: none; text-align: center; font-size: 11px; color: #555; font-family: "Liberation Serif", "Noto Sans CJK SC", serif; }
.c.n { width: 14px; }
.c.k { color: #333; font-weight: bold; }
.c.m { width: 15.500px; }
.c.x { width: 12px; }
.draw-label { width: 47px; margin-left: 9px; color: #444; font-size: 11px; }
.bar-draw .d { margin-right: 1px; }

.status { height: 18px; flex: none; display: flex; align-items: center; position: relative; background: #dcdbd6; border-top: 1px solid #bcbbb6; color: #4b4b49; }
.st-slide { margin-left: 70px; }
.st-theme { margin-left: 112px; }
.st-right { margin-left: auto; display: flex; align-items: center; margin-right: 0; }
.st-right .t { height: 17px; }
.st-zoom { width: 35px; text-align: center; font-size: 11px; }
.st-minus { width: 14px; height: 14px; border: 1px solid #bbb; border-radius: 50%; background: #eee; text-align: center; line-height: 11px; margin-right: 3px; }
.sogou { width: 92px; height: 14px; margin-right: 3px; display: flex; align-items: center; gap: 2px; background: #d4e2f0; color: #2f7fc5; font-size: 10px; font-weight: bold; }
.sogou svg { width: 10px; height: 10px; flex: none; }
.sg-cn { width: 11px; }
.sg-dot { color: #9a9fa6; font-weight: normal; width: 10px; }
.tip { position: absolute; left: 970px; top: -15px; width: 34px; height: 13px; font-size: 8px; line-height: 13px; text-align: center; background: #cfdbe6; border-radius: 2px; color: #49566a; }

.taskbar { height: 34px; flex: none; display: flex; align-items: stretch; background: #3a5a74; color: #e6edf3; font-size: 10.200px; }
.start { width: 47px; display: flex; align-items: center; justify-content: center; }
.start svg { width: 14px; height: 14px; margin-left: -7px; }
.task { width: 128px; display: flex; align-items: center; padding-left: 5px; border-bottom: 2px solid #86b2d6; margin-right: 5px; }
.task svg { width: 20px; height: 20px; flex: none; margin-right: 2px; }
.task span { white-space: nowrap; }
.task.active { width: 134px; background: #1b65a9; padding-left: 8px; margin-right: 0; }
.tray { margin-left: auto; display: flex; align-items: center; color: #e6edf3; }
.tr-up { width: 12px; height: 12px; margin-right: 7px; }
.tr-i { width: 14px; height: 14px; margin-right: 6px; }
.tr-n { width: 15px; height: 14px; margin-right: 5px; }
.tr-cn { font-size: 12px; font-weight: bold; color: #fff; margin-right: 13px; }
.tr-s { width: 13px; height: 13px; margin-right: 10px; }
.clock { width: 62px; display: flex; flex-direction: column; align-items: center; line-height: 16px; font-size: 11.500px; margin-right: 12px; }
.tr-b { width: 15px; height: 15px; margin-right: 20px; }

.popup { position: absolute; left: 824px; top: 46px; width: 74px; height: 200px; padding: 0 1px; background: linear-gradient(90deg, #dcdbd8 0, #dcdbd8 18px, #c9c8c4 22px, #eeedf0 23px); border: 1px solid #a9a8a5; box-shadow: 1px 1px 1px #777; }
.pi { height: 22px; display: flex; align-items: center; padding: 0 0 2px 1px; color: #444; font-size: 11px; white-space: nowrap; }
.pi svg { width: 11px; height: 11px; margin-right: 3px; }
.pi.plain { padding-left: 15px; }
.pi.hot { background: #f4dfa4; box-shadow: inset 0 0 0 1px #e5d08e; }
.cursor { position: absolute; left: 847px; top: 66px; width: 11px; height: 16px; }
```
